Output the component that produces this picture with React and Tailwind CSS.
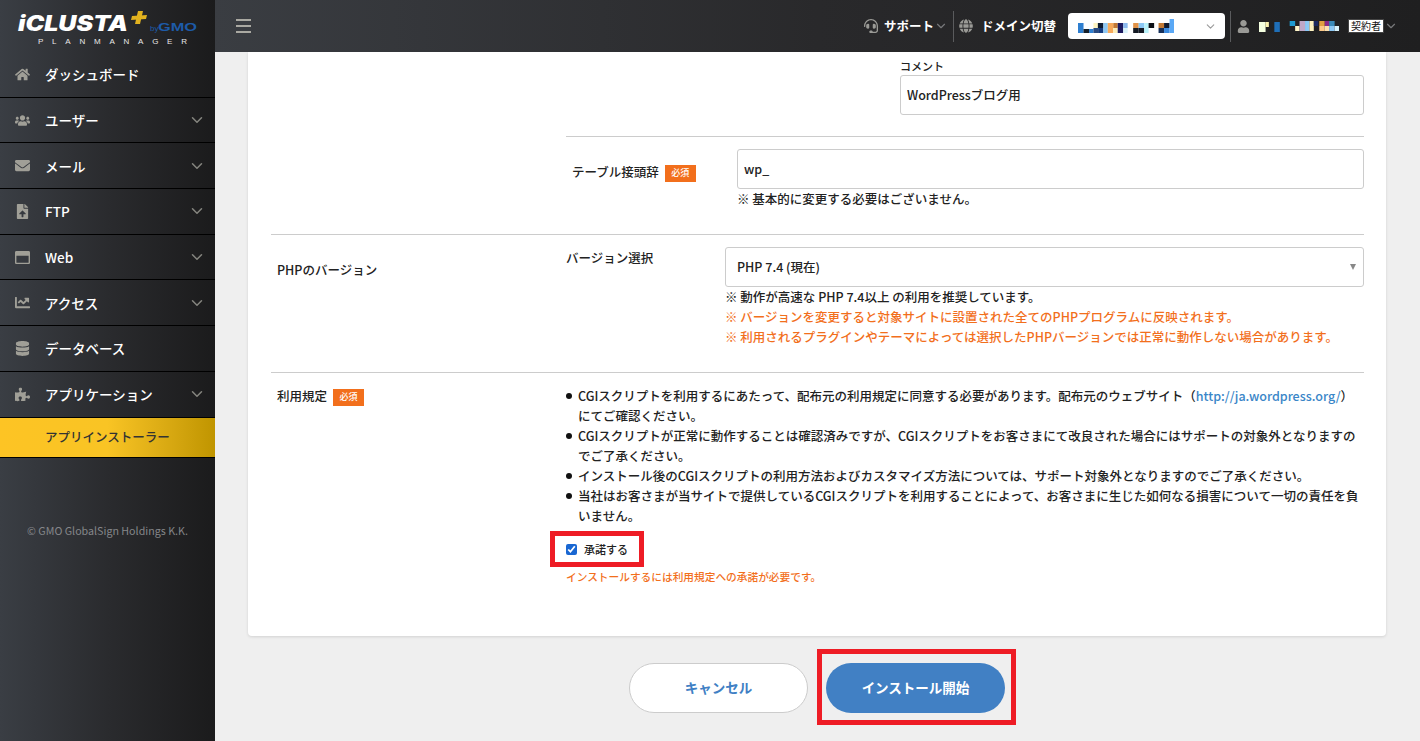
import { FaHome, FaUsers, FaEnvelope, FaFileUpload, FaRegWindowMaximize, FaChartLine, FaDatabase, FaPuzzlePiece, FaGlobe, FaHeadset, FaUser } from "react-icons/fa";
import { FiChevronDown } from "react-icons/fi";

const menu = [
  { label: "ダッシュボード", icon: FaHome },
  { label: "ユーザー", icon: FaUsers, arrow: true },
  { label: "メール", icon: FaEnvelope, arrow: true },
  { label: "FTP", icon: FaFileUpload, arrow: true },
  { label: "Web", icon: FaRegWindowMaximize, arrow: true },
  { label: "アクセス", icon: FaChartLine, arrow: true },
  { label: "データベース", icon: FaDatabase },
  { label: "アプリケーション", icon: FaPuzzlePiece, arrow: true },
];

// mosaic blocks that hide the account names: [x, y, w, h, colour]
const domainBlocks = [
  [0, 0, 5, 10, "#2f7fd0"], [5, 6, 5, 4, "#16202a"], [10, 6, 4, 4, "#2f7fd0"], [14, 0, 4, 5, "#fdf3c0"], [14, 5, 5, 5, "#2a4a80"],
  [18, 0, 5, 5, "#0d1b33"], [19, 5, 4, 5, "#123a80"], [23, 0, 4, 10, "#8cc8f5"], [27, 0, 5, 10, "#f7a95a"], [32, 0, 4, 5, "#c47a35"],
  [32, 5, 4, 5, "#fdeeb8"], [36, 0, 5, 10, "#1c1a60"], [41, 0, 4, 5, "#8ab8ee"], [41, 5, 4, 5, "#d8f2fa"], [50, 0, 5, 5, "#e09248"],
  [50, 5, 5, 5, "#141a24"], [55, 0, 5, 5, "#8cc8f5"], [55, 5, 5, 5, "#141a24"], [60, 0, 4, 10, "#b8f2fa"], [64, 0, 5, 5, "#0b0f16"],
  [73, 0, 5, 5, "#c47a35"], [73, 5, 5, 5, "#16305a"], [78, 0, 5, 5, "#111a2e"], [78, 5, 5, 5, "#3a8ae0"], [83, -4, 4, 14, "#5aa8f5"],
];
const userBlocks = [
  [0, 1, 6, 10, "#f4ffe0"], [6, 1, 3, 5, "#fbf3b0"], [14, 1, 5, 10, "#1f6fb8"], [28, 0, 5, 5, "#1f9ad0"], [33, 5, 4, 5, "#fff6c8"],
  [37, 0, 5, 10, "#c0a8c8"], [42, 0, 4, 5, "#8cc8f5"], [42, 5, 4, 5, "#8cc8f5"], [46, 0, 4, 10, "#fdf3c0"], [50, 0, 4, 5, "#1c2a60"],
  [55, 0, 5, 5, "#e0a040"], [55, 5, 5, 5, "#fbc888"], [60, 0, 4, 5, "#882a88"], [60, 5, 4, 5, "#fbe0b0"], [64, 0, 5, 5, "#3a8ab8"],
  [64, 5, 5, 5, "#8cc8f5"], [69, 5, 4, 5, "#d8f2fa"],
];

function Mosaic({ blocks, width, height, viewWidth, top = 0 }) {
  return (
    <svg width={width} height={height} viewBox={`0 ${top} ${viewWidth} ${height}`} preserveAspectRatio="none" className="block shrink-0">
      {blocks.map(([x, y, w, h, c], i) => (
        <rect key={i} x={x} y={y} width={w} height={h} fill={c} />
      ))}
    </svg>
  );
}

function Logo() {
  return (
    <svg width="215" height="52" viewBox="0 0 215 52" className="block shrink-0">
      <text x="18" y="31" textLength="110" lengthAdjust="spacingAndGlyphs" fontFamily="Inter" fontWeight="900" fontStyle="italic" fontSize="21" fill="#fff">iCLUSTA</text>
      <polygon points="138,11 143,11 140,24 135,24" fill="#e2b21f" />
      <polygon points="132,16 147,15 146,19 131,20" fill="#e2b21f" />
      <text x="150" y="31" fontFamily="Liberation Sans" fontSize="8" fill="#1d5ba8">by</text>
      <text x="158" y="31" textLength="39" lengthAdjust="spacingAndGlyphs" fontFamily="Liberation Sans" fontWeight="700" fontSize="11.5" fill="#1d5ba8">GMO</text>
      <text x="38" y="44" textLength="149" fontFamily="Liberation Sans" fontSize="8" fill="#e8e8e8">PLANMANAGER</text>
    </svg>
  );
}

function Sidebar() {
  return (
    <aside className="w-[215px] shrink-0 h-[741px] bg-gradient-to-r from-[#3a3e44] via-[#2a2b2e] to-[#1b1b1c] flex flex-col">
      <Logo />
      <nav>
        {menu.map(({ label, icon: Icon, arrow }) => (
          <div key={label} className="h-[45.7px] flex items-center border-b border-black pl-[14px] pr-[9px]">
            <span className="w-[16px] mr-[15px] shrink-0 flex justify-center">
              <Icon className="text-[15px] text-[#a09f97]" />
            </span>
            <span className="flex-1 text-[13.5px] font-medium text-white">{label}</span>
            {arrow && <FiChevronDown className="text-[18px] text-[#85857f]" />}
          </div>
        ))}
        <div className="h-[40.5px] flex items-center pl-[45px] border-b border-black bg-gradient-to-r from-[#fdc424] via-[#f9c424] to-[#c09500] text-[12.5px] font-medium text-[#333]">
          アプリインストーラー
        </div>
      </nav>
      <p className="mt-[65px] text-center text-[10.7px] text-[#85878a]">© GMO GlobalSign Holdings K.K.</p>
    </aside>
  );
}

function Header() {
  return (
    <header className="h-[52px] shrink-0 flex items-center bg-gradient-to-r from-[#3a3d42] via-[#29292b] to-[#1f1f20] pl-[21px] pr-[22px]">
      <div className="w-[15px] flex flex-col gap-[4.5px]">
        <span className="h-[1.5px] bg-[#aaa9a2]" />
        <span className="h-[1.5px] bg-[#aaa9a2]" />
        <span className="h-[1.5px] bg-[#aaa9a2]" />
      </div>
      <div className="ml-auto flex items-center">
        <FaHeadset className="text-[14px] text-[#9a9a96]" />
        <span className="ml-[6px] text-[12.5px] font-bold text-white">サポート</span>
        <FiChevronDown className="text-[14px] text-[#77787a] ml-[0.5px]" />
        <span className="w-px h-[31px] bg-[#5a5b5d] ml-[5px] mr-[5px]" />
        <FaGlobe className="text-[14px] text-[#9a9a96]" />
        <span className="ml-[7.5px] text-[12.5px] font-bold text-white">ドメイン切替</span>
        <div className="ml-[11.5px] w-[157px] h-[26px] bg-white rounded-[4px] flex items-center pl-[10px] pr-[8px] justify-between">
          <Mosaic blocks={domainBlocks} width={96} height={14} viewWidth={87} top={-4} />
          <FiChevronDown className="text-[13px] text-[#9a9a9a]" />
        </div>
        <span className="w-px h-[31px] bg-[#5a5b5d] ml-[5px] mr-[6px]" />
        <FaUser className="text-[13px] text-[#9a9a96]" />
        <span className="ml-[9px]"><Mosaic blocks={userBlocks} width={80} height={11} viewWidth={73} /></span>
        <span className="ml-[9.5px] bg-white text-[#111] text-[10px] leading-[12px] border border-[#444] px-[2px]">契約者</span>
        <FiChevronDown className="text-[14px] text-[#77787a]" />
      </div>
    </header>
  );
}

function Badge() {
  return <span className="inline-flex items-center justify-center w-[31px] h-[17px] mt-[2px] bg-[#f26f1c] text-white text-[9px] font-medium">必須</span>;
}

const inputClass = "block h-[40px] w-full border border-[#ccc] rounded-[3px] px-[6px] text-[12.5px] font-medium text-[#222] bg-white outline-none";

function Term({ children }) {
  return (
    <li className="relative pl-[12px]">
      <span className="absolute left-0 top-[7px] w-[6px] h-[6px] rounded-full bg-[#111]" />
      {children}
    </li>
  );
}

function Card() {
  return (
    <section className="ml-[33px] mr-[34px] bg-white rounded-b-[4px] shadow-[0_1px_3px_rgba(0,0,0,0.12)] pl-[23px] pr-[22px] h-[584px] text-[12.5px] text-[#222] font-medium">
      {/* comment + table prefix */}
      <div className="h-[183px] border-b border-[#ccc] pt-[5px]">
        <div className="pl-[629px]">
          <p className="text-[11px] leading-[18px]">コメント</p>
          <input className={`${inputClass} h-[39px] pb-[2px]`} defaultValue="WordPressブログ用" readOnly />
        </div>
        <div className="ml-[295px] mt-[21px] border-t border-[#ccc] pt-[12px] flex">
          <div className="w-[171px] shrink-0 pl-[6px] pt-[13px] flex items-center gap-[6px] self-start leading-[20px]">
            <span>テーブル接頭辞</span>
            <Badge />
          </div>
          <div className="flex-1">
            <input className={`${inputClass} pb-[2px]`} defaultValue="wp_" readOnly />
            <p className="leading-[20px]">※ 基本的に変更する必要はございません。</p>
          </div>
        </div>
      </div>

      {/* php version */}
      <div className="h-[138px] border-b border-[#ccc] flex">
        <div className="w-[295px] shrink-0 pl-[6px] pt-[25px] leading-[20px]">PHPのバージョン</div>
        <div className="w-[159px] shrink-0 pt-[13px] leading-[20px]">バージョン選択</div>
        <div className="flex-1 pt-[12px]">
          <div className="relative">
            <select className={`${inputClass} appearance-none pl-[11px]`} defaultValue="74">
              <option value="74">PHP 7.4 (現在)</option>
            </select>
            <span className="absolute right-[8px] top-[17px] w-0 h-0 border-x-[3.5px] border-x-transparent border-t-[6px] border-t-[#888]" />
          </div>
          <div className="leading-[20px]">
            <p>※ 動作が高速な PHP 7.4以上 の利用を推奨しています。</p>
            <p className="text-[#f26f1c]">※ バージョンを変更すると対象サイトに設置された全てのPHPプログラムに反映されます。</p>
            <p className="text-[#f26f1c]">※ 利用されるプラグインやテーマによっては選択したPHPバージョンでは正常に動作しない場合があります。</p>
          </div>
        </div>
      </div>

      {/* terms */}
      <div className="flex">
        <div className="w-[295px] shrink-0 pl-[6px] pt-[13px] flex items-center gap-[6px] self-start leading-[20px]">
          <span>利用規定</span>
          <Badge />
        </div>
        <div className="flex-1 pt-[13px]">
          <ul className="leading-[20px]">
            <Term>CGIスクリプトを利用するにあたって、配布元の利用規定に同意する必要があります。配布元のウェブサイト（<a className="text-[#3a86c8]">http://ja.wordpress.org/</a>）にてご確認ください。</Term>
            <Term>CGIスクリプトが正常に動作することは確認済みですが、CGIスクリプトをお客さまにて改良された場合にはサポートの対象外となりますのでご了承ください。</Term>
            <Term>インストール後のCGIスクリプトの利用方法およびカスタマイズ方法については、サポート対象外となりますのでご了承ください。</Term>
            <Term>当社はお客さまが当サイトで提供しているCGIスクリプトを利用することによって、お客さまに生じた如何なる損害について一切の責任を負いません。</Term>
          </ul>
          <div className="-ml-[16px] mt-[5px] w-[94px] h-[36px] border-[5px] border-[#ee1c25] flex items-center pl-[11px]">
            <label className="flex items-center gap-[7px] text-[11px]">
              <input type="checkbox" defaultChecked readOnly className="m-0 w-[11px] h-[11px] accent-[#1967d2]" />
              承諾する
            </label>
          </div>
          <p className="text-[10.7px] leading-[20px] text-[#f26f1c]">インストールするには利用規定への承諾が必要です。</p>
        </div>
      </div>
    </section>
  );
}

export default function App() {
  return (
    <div className="flex h-[741px] w-[1420px] overflow-hidden bg-[#efefef] font-['Noto_Sans_CJK_JP','Noto_Sans',sans-serif]">
      <Sidebar />
      <div className="flex-1 flex flex-col min-w-0">
        <Header />
        <main className="flex-1">
          <Card />
          <div className="flex items-start mt-[13px] pl-[414px] gap-[9px]">
            <button className="w-[179px] h-[50px] mt-[14px] pb-[2px] rounded-full bg-white border border-[#ccc] text-[13.5px] font-bold text-[#4080c4]">キャンセル</button>
            <div className="border-[5px] border-[#ee1c25] pl-[4px] pr-[6px] pt-[9px] pb-[7px]">
              <button className="block w-[179px] h-[50px] pb-[2px] rounded-full bg-[#4180c4] text-[13.5px] font-bold text-white">インストール開始</button>
            </div>
          </div>
        </main>
      </div>
    </div>
  );
}
